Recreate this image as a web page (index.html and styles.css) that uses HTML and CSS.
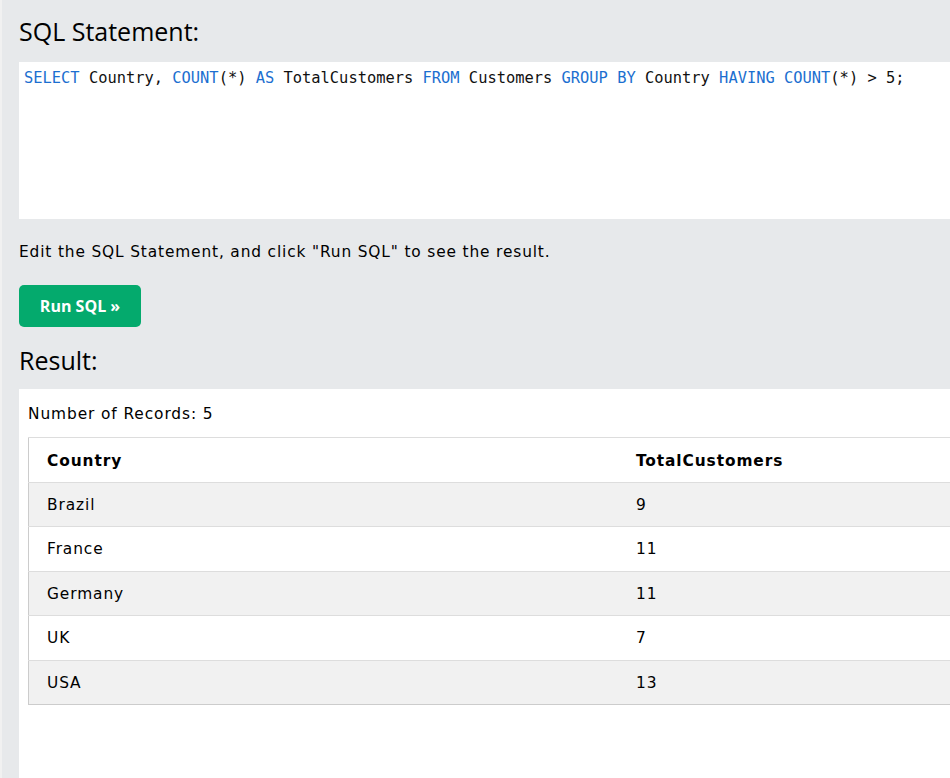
FILE: index.html
```html
<!DOCTYPE html>
<html>
<head>
<meta charset="utf-8">
<link rel="stylesheet" href="styles.css">
</head>
<body>
<div class="page">
  <h2 class="title">SQL Statement:</h2>
  <div class="editor"><span class="kw">SELECT</span> Country, <span class="kw">COUNT</span>(*) <span class="kw">AS</span> TotalCustomers <span class="kw">FROM</span> Customers <span class="kw">GROUP</span> <span class="kw">BY</span> Country <span class="kw">HAVING</span> <span class="kw">COUNT</span>(*) &gt; 5;</div>
  <p class="hint">Edit the SQL Statement, and click "Run SQL" to see the result.</p>
  <button class="run">Run SQL »</button>
  <h2 class="title result-title">Result:</h2>
  <div class="result">
    <div class="count">Number of Records: 5</div>
    <table class="grid">
      <tr><th class="c1">Country</th><th>TotalCustomers</th></tr>
      <tr><td>Brazil</td><td>9</td></tr>
      <tr><td>France</td><td>11</td></tr>
      <tr><td>Germany</td><td>11</td></tr>
      <tr><td>UK</td><td>7</td></tr>
      <tr><td>USA</td><td>13</td></tr>
    </table>
  </div>
</div>
</body>
</html>
```
FILE: styles.css
```css
html, body {
  margin: 0;
  padding: 0;
  height: 100%;
  overflow: hidden;
  background: #e7e9eb;
}
body {
  border-left: 2px solid #f1f1f1;
  font-family: "DejaVu Sans", Verdana, sans-serif;
  color: #000;
}
.page {
  width: 1100px;
  padding-left: 17px;
}
.title {
  margin: 0;
  padding-top: 14px;
  height: 62px;
  box-sizing: border-box;
  font-family: "Open Sans", sans-serif;
  font-weight: 400;
  font-size: 25px;
  line-height: 34px;
}
.editor {
  background: #fff;
  height: 157px;
  box-sizing: border-box;
  padding: 5px 5px;
  font-family: "DejaVu Sans Mono", monospace;
  font-size: 15.4px;
  line-height: 22px;
  white-space: pre;
  color: #111;
}
.kw { color: #1c6fd0; }
.hint {
  margin: 0;
  padding-top: 22px;
  font-size: 15.4px;
  letter-spacing: 0.85px;
  line-height: 22px;
  height: 66px;
  box-sizing: border-box;
}
.run {
  display: block;
  width: 122px;
  height: 42px;
  border: 0;
  border-radius: 5px;
  background: #04aa6d;
  color: #fff;
  font-family: "Open Sans", sans-serif;
  font-weight: 700;
  font-size: 16px;
  padding: 0;
}
.result-title {
  padding-top: 16px;
  height: 62px;
}
.result {
  background: #fff;
  height: 400px;
  padding: 12px 0 0 9px;
}
.count {
  font-size: 15.4px;
  letter-spacing: 0.9px;
  line-height: 24px;
  padding-top: 1px;
  height: 36px;
  box-sizing: border-box;
}
.grid {
  border-collapse: collapse;
  width: 1000px;
  border: 1px solid #ccc;
  font-size: 15.4px;
  letter-spacing: 0.9px;
}
.grid th, .grid td {
  text-align: left;
  padding: 11px 18px 9px;
  line-height: 23.5px;
  border-top: 1px solid #ddd;
}
.grid th {
  padding-top: 12px;
  padding-bottom: 8px;
}
.grid th.c1 { width: 553px; }
.grid tr:nth-child(even) { background: #f1f1f1; }
```
